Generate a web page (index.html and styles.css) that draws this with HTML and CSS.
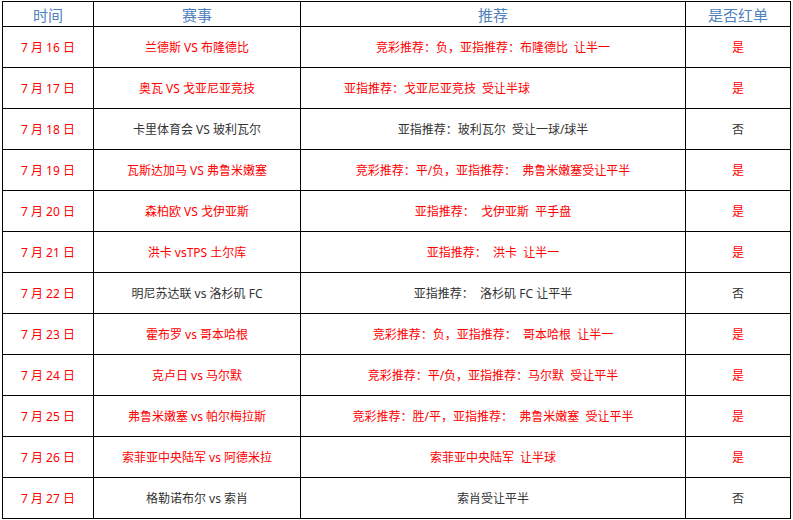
FILE: index.html
```html
<!DOCTYPE html>
<html lang="zh-CN">
<head>
<meta charset="utf-8">
<title>推荐记录</title>
<link rel="stylesheet" href="styles.css">
</head>
<body>
<table class="record">
  <colgroup>
    <col class="c-date">
    <col class="c-match">
    <col class="c-tip">
    <col class="c-hit">
  </colgroup>
  <thead>
    <tr><th>时间</th><th>赛事</th><th>推荐</th><th>是否红单</th></tr>
  </thead>
  <tbody>
    <tr class="hit"><td class="date">7 月 16 日</td><td>兰德斯 VS 布隆德比</td><td>竞彩推荐：负，亚指推荐：布隆德比&nbsp; 让半一</td><td>是</td></tr>
    <tr class="hit"><td class="date">7 月 17 日</td><td>奥瓦 VS 戈亚尼亚竞技</td><td class="shift">亚指推荐：戈亚尼亚竞技&nbsp; 受让半球</td><td>是</td></tr>
    <tr class="miss"><td class="date">7 月 18 日</td><td>卡里体育会 VS 玻利瓦尔</td><td>亚指推荐：玻利瓦尔&nbsp; 受让一球/球半</td><td>否</td></tr>
    <tr class="hit"><td class="date">7 月 19 日</td><td>瓦斯达加马 VS 弗鲁米嫩塞</td><td>竞彩推荐：平/负，亚指推荐：&nbsp; 弗鲁米嫩塞受让平半</td><td>是</td></tr>
    <tr class="hit"><td class="date">7 月 20 日</td><td>森柏欧 VS 戈伊亚斯</td><td>亚指推荐：&nbsp; 戈伊亚斯&nbsp; 平手盘</td><td>是</td></tr>
    <tr class="hit"><td class="date">7 月 21 日</td><td>洪卡 vsTPS 土尔库</td><td>亚指推荐：&nbsp; 洪卡&nbsp; 让半一</td><td>是</td></tr>
    <tr class="miss"><td class="date">7 月 22 日</td><td>明尼苏达联 vs 洛杉矶 FC</td><td>亚指推荐：&nbsp; 洛杉矶 FC 让平半</td><td>否</td></tr>
    <tr class="hit"><td class="date">7 月 23 日</td><td>霍布罗 vs 哥本哈根</td><td>竞彩推荐：负，亚指推荐：&nbsp; 哥本哈根&nbsp; 让半一</td><td>是</td></tr>
    <tr class="hit"><td class="date">7 月 24 日</td><td>克卢日 vs 马尔默</td><td>竞彩推荐：平/负，亚指推荐：马尔默&nbsp; 受让平半</td><td>是</td></tr>
    <tr class="hit"><td class="date">7 月 25 日</td><td>弗鲁米嫩塞 vs 帕尔梅拉斯</td><td>竞彩推荐：胜/平，亚指推荐：&nbsp; 弗鲁米嫩塞&nbsp; 受让平半</td><td>是</td></tr>
    <tr class="hit"><td class="date">7 月 26 日</td><td>索菲亚中央陆军 vs 阿德米拉</td><td>索菲亚中央陆军&nbsp; 让半球</td><td>是</td></tr>
    <tr class="miss"><td class="date">7 月 27 日</td><td>格勒诺布尔 vs 索肖</td><td>索肖受让平半</td><td>否</td></tr>
  </tbody>
</table>
</body>
</html>
```

FILE: styles.css
```css
html, body {
  background: #ffffff;
}

body {
  margin: 1px 0 0 2px;
  font-family: "Noto Sans", "Noto Sans CJK SC", sans-serif;
  font-size: 12px;
}

.record {
  border-collapse: collapse;
  table-layout: fixed;
  width: 789px;
}

.c-date { width: 91px; }
.c-match { width: 207px; }
.c-tip { width: 385px; }
.c-hit { width: 105px; }

.record th,
.record td {
  border: 1px solid #000000;
  padding: 0;
  text-align: center;
  vertical-align: middle;
  white-space: nowrap;
  box-sizing: border-box;
}

.record th {
  height: 25px;
  font-size: 15px;
  font-weight: normal;
  color: #4f81bd;
}

.record td {
  height: 41px;
}

.hit td {
  color: #ff0000;
}

.miss td {
  color: #333333;
}

.record td.date {
  color: #ff0000;
}

.record td.shift {
  padding-right: 112px;
}
```
